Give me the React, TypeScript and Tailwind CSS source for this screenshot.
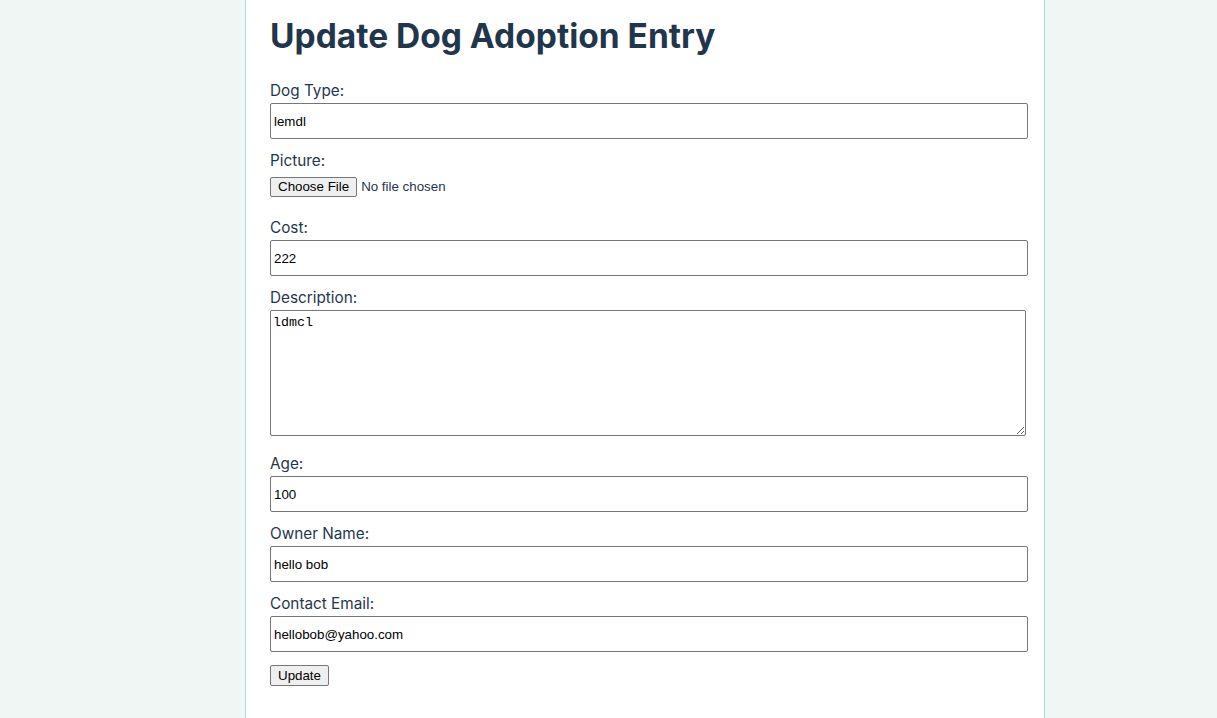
import React from "react";

const labelCls = "block text-[15.3px] leading-[24px] text-[#1f364d]";
const inputCls =
  "block w-[758px] h-[36px] border border-[#767676] rounded-[2px] px-[3px] text-[13.33px] text-black bg-white mb-[10px] outline-none";
const arial = { fontFamily: "'Liberation Sans', Arial, sans-serif" };

export default function App() {
  return (
    <div className="min-h-screen bg-[#eff6f3] font-['Inter',sans-serif]">
      <div className="ml-[245px] w-[800px] min-h-[718px] bg-white border-x border-[#a8dbe2] px-[24px] pt-[15px]">
        <h1 className="text-[33.5px] leading-[42px] font-bold text-[#1f364d] mb-[22px]">
          Update Dog Adoption Entry
        </h1>
        <form onSubmit={(e) => e.preventDefault()}>
          <label className={labelCls}>Dog Type:</label>
          <input className={inputCls} style={arial} defaultValue="lemdl" />

          <label className={labelCls}>Picture:</label>
          <div className="h-[33px] mb-[10px] pt-[4px] flex items-start gap-[4px] font-['Liberation_Sans',Arial,sans-serif] text-[13.33px] text-[#1f364d]">
            <span className="inline-flex items-center h-[20px] px-[7px] border border-[#767676] rounded-[2px] bg-[#efefef] text-black">
              Choose File
            </span>
            <span className="leading-[20px]">No file chosen</span>
          </div>

          <label className={labelCls}>Cost:</label>
          <input className={inputCls} style={arial} defaultValue="222" />

          <label className={labelCls}>Description:</label>
          <textarea
            className="block w-[756px] h-[126px] border border-[#767676] rounded-[2px] px-[2px] py-[2px] text-[13.33px] text-black bg-white mb-[16px] outline-none resize-y font-['Liberation_Mono',monospace]"
            defaultValue="ldmcl"
          />

          <label className={labelCls}>Age:</label>
          <input className={inputCls} style={arial} defaultValue="100" />

          <label className={labelCls}>Owner Name:</label>
          <input className={inputCls} style={arial} defaultValue="hello bob" />

          <label className={labelCls}>Contact Email:</label>
          <input className={inputCls} style={arial} defaultValue="hellobob@yahoo.com" />

          <button
            type="submit"
            className="mt-[3px] h-[21px] px-[7px] border border-[#767676] rounded-[2px] bg-[#efefef] text-[13.33px] text-black font-['Liberation_Sans',Arial,sans-serif] leading-none"
          >
            Update
          </button>
        </form>
      </div>
    </div>
  );
}
